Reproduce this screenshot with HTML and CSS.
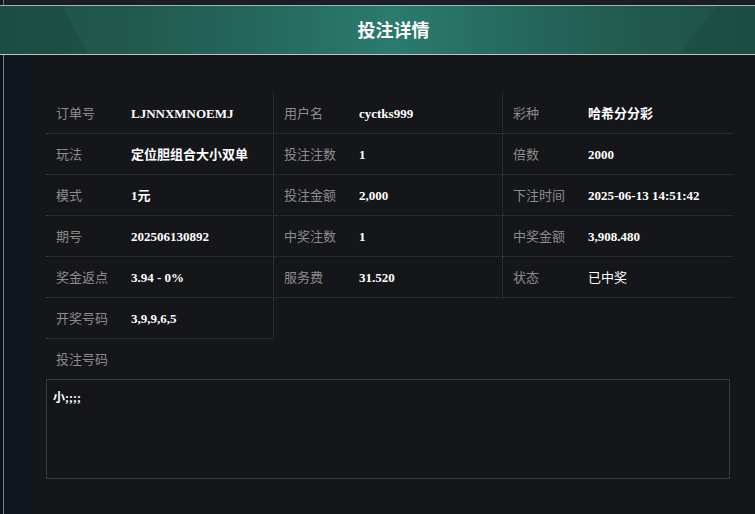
FILE: index.html
```html
<!DOCTYPE html>
<html lang="zh-CN">
<head>
<meta charset="utf-8">
<title>投注详情</title>
<link rel="stylesheet" href="styles.css">
</head>
<body>
<div class="frame">
  <div class="topbar"></div>
  <header class="header">
    <h1 class="title">投注详情</h1>
  </header>
  <main class="content">
    <div class="grid">
      <div class="cell"><span class="label">订单号</span><span class="value">LJNNXMNOEMJ</span></div>
      <div class="cell"><span class="label">用户名</span><span class="value">cyctks999</span></div>
      <div class="cell last"><span class="label">彩种</span><span class="value">哈希分分彩</span></div>

      <div class="cell"><span class="label">玩法</span><span class="value">定位胆组合大小双单</span></div>
      <div class="cell"><span class="label">投注注数</span><span class="value">1</span></div>
      <div class="cell last"><span class="label">倍数</span><span class="value">2000</span></div>

      <div class="cell"><span class="label">模式</span><span class="value">1元</span></div>
      <div class="cell"><span class="label">投注金额</span><span class="value">2,000</span></div>
      <div class="cell last"><span class="label">下注时间</span><span class="value">2025-06-13 14:51:42</span></div>

      <div class="cell"><span class="label">期号</span><span class="value">202506130892</span></div>
      <div class="cell"><span class="label">中奖注数</span><span class="value">1</span></div>
      <div class="cell last"><span class="label">中奖金额</span><span class="value">3,908.480</span></div>

      <div class="cell"><span class="label">奖金返点</span><span class="value">3.94 - 0%</span></div>
      <div class="cell"><span class="label">服务费</span><span class="value">31.520</span></div>
      <div class="cell last"><span class="label">状态</span><span class="value status">已中奖</span></div>

      <div class="cell"><span class="label">开奖号码</span><span class="value">3,9,9,6,5</span></div>
    </div>
    <div class="numbers-label">投注号码</div>
    <div class="numbers-box">小;;;;</div>
  </main>
</div>
</body>
</html>
```

FILE: styles.css
```css
html, body {
  margin: 0;
  padding: 0;
  background: #141619;
  width: 755px;
  height: 514px;
  overflow: hidden;
}

.frame {
  display: flex;
  flex-direction: column;
  height: 514px;
  font-family: "Noto Sans CJK SC", "Noto Sans", sans-serif;
}

.topbar {
  height: 5px;
  flex: none;
  background: #1b1d26;
  border-left: 1px solid #6d7378;
  margin-left: 3px;
}

.header {
  position: relative;
  flex: none;
  height: 50px;
  padding-left: 32px;
  padding-bottom: 2px;
  box-sizing: border-box;
  border-top: 1px solid #a7b2b0;
  border-bottom: 1px solid #bcc6c3;
  background: linear-gradient(90deg, #1f5149 0%, #22594f 18%, #26695d 36%, #2b7b6e 52%, #26695d 68%, #22594f 84%, #1f5149 100%);
  display: flex;
  align-items: center;
  justify-content: center;
  overflow: hidden;
}

.header::before,
.header::after {
  content: "";
  position: absolute;
  top: 0;
  bottom: 0;
  width: 100px;
  background: rgba(10, 40, 34, 0.12);
}

.header::before {
  left: 0;
  clip-path: polygon(0 0, 62% 0, 88% 100%, 0 100%);
}

.header::after {
  right: 0;
  clip-path: polygon(62% 0, 100% 0, 100% 100%, 24% 100%);
}

.title {
  margin: 0;
  font-size: 18px;
  line-height: 24px;
  font-weight: 700;
  color: #ffffff;
  position: relative;
}

.content {
  flex: 1;
  background: linear-gradient(90deg, #0d1117 0, #0d1117 3px, #7a8086 3px, #7a8086 4px, #10161f 4px, #10161f 32px, #141619 32px);
  padding: 38px 22px 0 46px;
}

.grid {
  display: grid;
  grid-template-columns: 228px 229px 230px;
  width: 687px;
}

.cell {
  display: flex;
  align-items: center;
  height: 40px;
  padding-left: 10px;
  border-bottom: 1px dotted #3a3d42;
  border-right: 1px dotted #3a3d42;
}

.cell.last {
  border-right: none;
}

.label {
  width: 75px;
  flex: none;
  font-size: 13px;
  line-height: 20px;
  padding-bottom: 1px;
  color: #8c8c8c;
}

.value {
  font-family: "Liberation Serif", "Noto Sans CJK SC", serif;
  font-size: 13px;
  line-height: 20px;
  padding-top: 1px;
  font-weight: 700;
  color: #ffffff;
  white-space: nowrap;
}

.value.status {
  font-family: "Noto Sans CJK SC", sans-serif;
  font-weight: 400;
  padding-top: 0;
  padding-bottom: 1px;
}

.numbers-label {
  height: 40px;
  display: flex;
  align-items: center;
  padding-left: 10px;
  font-size: 13px;
  line-height: 20px;
  padding-bottom: 1px;
  box-sizing: border-box;
  color: #8c8c8c;
}

.numbers-box {
  width: 670px;
  height: 86px;
  border: 1px solid #3a3c41;
  background: #131519;
  padding: 9px 6px 3px 6px;
  font-family: "Liberation Serif", "Noto Sans CJK SC", serif;
  font-size: 12px;
  line-height: 18px;
  font-weight: 700;
  color: #ffffff;
}
```
